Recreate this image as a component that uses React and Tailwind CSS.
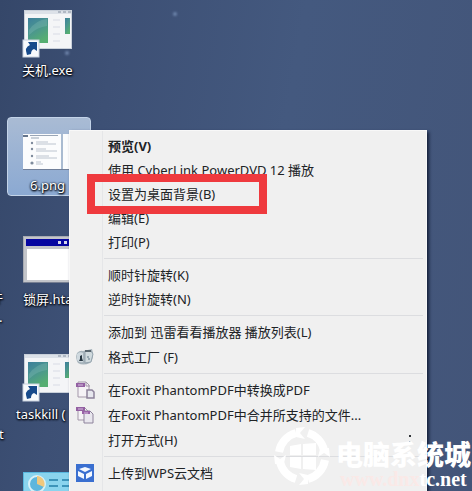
import React from 'react';

const labelShadow = '[text-shadow:0_1px_2px_#000,1px_1px_2px_#0f172a,0_0_2px_#0f172a]';

function ProgramIcon() {
  return (
    <svg width="52" height="48" viewBox="0 0 52 48" aria-hidden="true">
      <defs>
        <linearGradient id="screen" x1="0" y1="0" x2="0.5" y2="1">
          <stop offset="0" stopColor="#3d7f9b" />
          <stop offset="0.5" stopColor="#4a9590" />
          <stop offset="1" stopColor="#56ae72" />
        </linearGradient>
      </defs>
      <rect x="2" y="0" width="48" height="39" fill="#c9d0da" />
      <rect x="3" y="4" width="46" height="34" fill="#f4f5f7" />
      <rect x="3" y="1" width="46" height="3" fill="#dce1e8" />
      <path d="M36 2h3M41 2h3M46 2h3" stroke="#8590a0" strokeWidth="1" />
      <rect x="6" y="8" width="20" height="25" fill="url(#screen)" />
      <path d="M7 20Q14 10 25 9V16Q15 17 7 25Z" fill="#8ac5ba" opacity="0.3" />
      <rect x="43" y="8" width="5" height="16" fill="url(#screen)" />
      <path d="M31 10h7M31 17h7M31 24h7M31 31h7" stroke="#e6e8ee" strokeWidth="2" />
      <rect x="1" y="30" width="16" height="17" fill="#f8fafc" stroke="#c9d2df" strokeWidth="1" />
      <path d="M5 45Q2 37 8 35L6 32H15V41L12 39Q9 40 9 44Z" fill="#174a8b" />
    </svg>
  );
}

function ThumbnailIcon() {
  return (
    <svg width="52" height="38" viewBox="0 0 52 38" aria-hidden="true">
      <rect x="1" y="1" width="50" height="35" fill="#fbfcfd" />
      <path d="M1 36.500H51" stroke="#71809a" />
      <rect x="1" y="2" width="5" height="2" fill="#66758b" />
      <path d="M8 2.500H36M9 5h8" stroke="#9aa6b6" strokeWidth="1.200" />
      <path d="M14 9h12M14 11h20M14 16h10M14 18h21M14 23h13M14 25h21M14 29h5M14 31h7" stroke="#bcc4cf" />
      <g fill="#7e8b9c">
        <circle cx="10" cy="10" r="1.200" />
        <circle cx="10" cy="16" r="1.200" />
        <circle cx="10" cy="23" r="1.200" />
        <circle cx="10" cy="30" r="1.600" />
      </g>
      <path d="M40 1V36" stroke="#a9bbd1" strokeWidth="2" />
    </svg>
  );
}

function WindowIcon() {
  return (
    <svg width="52" height="47" viewBox="0 0 52 47" aria-hidden="true">
      <rect x="1" y="0" width="51" height="47" fill="#a8abb3" />
      <rect x="2" y="1" width="50" height="45" fill="#c3c5ca" />
      <rect x="4" y="3" width="48" height="7" fill="#0606a0" />
      <path d="M36 5h3v3h-3zM42 5h3v3h-3z" fill="#d5d6ea" />
      <rect x="5" y="13" width="47" height="31" fill="#fff" />
      <path d="M1 46.500H52" stroke="#777f92" />
    </svg>
  );
}

function PanelIcon() {
  return (
    <svg className="ml-px" width="52" height="40" viewBox="0 0 52 40" aria-hidden="true">
      <rect width="52" height="40" fill="#58b7df" />
      <rect x="1" y="1" width="50" height="39" fill="#8ad4ee" />
      <circle cx="14" cy="12" r="8" fill="#5db6dc" stroke="#d9f1f8" strokeWidth="2" />
      <path d="M14 12V4a8 8 0 0 1 7 11Z" fill="#efc87e" />
      <path d="M26 8h9M39 8h12M26 14h9M39 14h12" stroke="#237fa9" strokeWidth="1.500" />
    </svg>
  );
}

function FactoryIcon() {
  return (
    <svg width="20" height="18" viewBox="0 0 20 18" aria-hidden="true">
      <path d="M2 5Q5 2 8 3L17 1Q20 9 15 15Q8 18 3 15Q0 10 2 5Z" fill="#a7b4bc" />
      <path d="M2 6Q5 3 8 5V14Q4 15 2 12Z" fill="#cfd9df" />
      <path d="M10 3h6l2 3-2 8-6 1Z" fill="#d0dade" stroke="#94a3ad" />
      <path d="M10 2h6v2h-6z" fill="#59666f" />
      <path d="M5 8l2-1v3l1 3H4l1-2Z" fill="#263641" />
      <path d="M12 9h2M13 11h2" stroke="#607987" />
    </svg>
  );
}

function ConvertIcon() {
  return (
    <svg width="20" height="20" viewBox="0 0 20 20" aria-hidden="true">
      <path d="M3 2h8l3 3v12H3z" fill="#f5f2f6" stroke="#a397a9" />
      <path d="M11 2v4h4" fill="none" stroke="#a397a9" />
      <rect x="1" y="3" width="9" height="4" fill="#9360a2" />
      <path d="M3 5h5" stroke="#d7bcdf" />
      <path d="M12 10h5l2 2v6h-7z" fill="#e7e7ee" stroke="#8d829b" strokeWidth="1.500" />
    </svg>
  );
}

function CombineIcon() {
  return (
    <svg width="20" height="20" viewBox="0 0 20 20" aria-hidden="true">
      <path d="M3 3h7l3 3v9H3z" fill="#f5f2f6" stroke="#a397a9" />
      <rect x="1" y="2" width="9" height="4" fill="#9360a2" />
      <path d="M9 6h6l3 3v9H9z" fill="#e9e7ee" stroke="#8d829b" />
      <rect x="7" y="6" width="8" height="3" fill="#9863a7" />
      <path d="M3 4h5M9 8h4" stroke="#d7bcdf" />
    </svg>
  );
}

function CloudDocIcon() {
  return (
    <svg width="20" height="20" viewBox="0 0 20 20" aria-hidden="true">
      <rect x="1" y="1" width="18" height="18" fill="#3a6fd0" />
      <path d="M10 4l6 2-6 3-6-3zM3 8l6 3v5l-6-3zM17 8l-6 3v5l6-3z" fill="#f4f8ff" />
    </svg>
  );
}

const groups = [
  [
    { text: '预览(V)', bold: true },
    { text: '使用 CyberLink PowerDVD 12 播放' },
    { text: '设置为桌面背景(B)', marked: true },
    { text: '编辑(E)' },
    { text: '打印(P)' },
  ],
  [{ text: '顺时针旋转(K)' }, { text: '逆时针旋转(N)' }],
  [{ text: '添加到 迅雷看看播放器 播放列表(L)' }, { text: '格式工厂 (F)', icon: <FactoryIcon /> }],
  [
    { text: '在Foxit PhantomPDF中转换成PDF', icon: <ConvertIcon /> },
    { text: '在Foxit PhantomPDF中合并所支持的文件...', icon: <CombineIcon /> },
    { text: '打开方式(H)', submenu: true },
  ],
  [{ text: '上传到WPS云文档', icon: <CloudDocIcon /> }],
];

function MenuItem({ item }) {
  return (
    <button
      type="button"
      role="menuitem"
      className={`relative flex h-6 w-full items-center whitespace-nowrap text-left ${item.bold ? 'font-bold' : ''}`}
    >
      <span className="flex w-[38px] shrink-0 justify-start pl-[5px]">{item.icon}</span>
      <span>{item.text}</span>
      {item.submenu && (
        <svg className="ml-auto mr-3" width="7" height="10" viewBox="0 0 7 10" aria-hidden="true">
          <path d="M2 0h2v2h-2zM2 6h2v2h-2z" fill="#303438" />
        </svg>
      )}
      {item.marked && (
        <span className="absolute -inset-y-2 left-[17px] z-10 w-[180px] border-8 border-[#ef3a3e]" />
      )}
    </button>
  );
}

function ContextMenu() {
  return (
    <div
      role="menu"
      className="absolute left-[69px] top-[130px] w-[358px] border border-[#f8f8f8] bg-[#f0f0f0] pb-4 pt-[3px] text-[13px] leading-6 text-[#202326] shadow-[2px_2px_3px_#15203a]"
    >
      <div className="absolute inset-y-0 left-[32px] w-px bg-[#e5e6e8]" />
      {groups.map((group, i) => (
        <React.Fragment key={i}>
          {i > 0 && (
            <div role="separator" className="flex h-[9px] items-center pl-[34px] pr-[3px]">
              <div className="h-px grow bg-[#dcdde0]" />
            </div>
          )}
          <div className={`flex flex-col ${i > 1 ? 'gap-px' : ''}`}>
            {group.map((item) => (
              <MenuItem key={item.text} item={item} />
            ))}
          </div>
        </React.Fragment>
      ))}
    </div>
  );
}

function Watermark() {
  return (
    <div className="absolute left-[274px] top-[427px] flex items-start gap-[6px] whitespace-nowrap text-white">
      <svg width="56" height="58" viewBox="0 0 56 58" aria-hidden="true">
        <g fill="none" stroke="#fff" strokeWidth="8">
          <path d="M34 6A23 24 0 0 1 50 23" />
          <path d="M51 33A23 24 0 0 1 34 52" />
          <path d="M22 52A23 24 0 0 1 6 35" />
          <path d="M5 25A23 24 0 0 1 22 6" />
        </g>
        <path d="M22 1L31 0 26 6 31 12 22 10ZM46 22L55 21 56 30 50 26 44 30ZM34 57L25 58 30 52 25 46 34 48ZM10 36L1 37 0 28 6 32 12 28Z" fill="#fff" />
        <path d="M16 19l11-2v11H16zM29 17l13-1v12H29zM16 30h11v12l-11-2zM29 30h13v13l-13-1z" fill="#fff" />
      </svg>
      <div className="pt-3">
        <p className="font-['Noto_Sans_CJK_SC',sans-serif] text-[27px] font-black leading-[30px]">电脑系统城</p>
        <p className="pl-1 font-['Liberation_Serif',serif] text-[20px] font-bold leading-5">
          <span className="text-[#fae9e7]">www.dnx</span>tc.net
        </p>
      </div>
    </div>
  );
}

function DesktopFile({ icon, label, className = '', labelClass = '' }) {
  return (
    <div className={`flex flex-col ${className}`}>
      {icon}
      <span className={`whitespace-nowrap text-[13px] leading-5 text-white ${labelShadow} ${labelClass}`}>{label}</span>
    </div>
  );
}

export default function App() {
  return (
    <main className="relative h-screen w-full overflow-hidden bg-[#43587d] bg-[linear-gradient(100deg,#354769_0%,#3d5075_22%,#44597f_55%,#435579_100%)] font-['Noto_Sans','Noto_Sans_CJK_SC',sans-serif]">
      <span className="absolute left-[173px] top-3 size-1 rounded-full bg-[#6f86ad] blur-[1px]" />
      <span className="absolute left-[65px] top-[51px] size-1 rounded-full bg-[#7186ac] blur-[1px]" />

      <div className={`absolute -left-[10px] top-[287px] text-[13px] leading-5 text-white ${labelShadow}`}>
        <p>件</p>
        <p className="pl-[9px]">.</p>
        <p className="pl-[9px] pt-[97px]">t</p>
      </div>

      <div className="flex flex-col items-start pl-[7px] pt-[10px]">
        <div className="h-[107px] pl-[15px]">
          <DesktopFile className="gap-[2px]" icon={<ProgramIcon />} label="关机.exe" />
        </div>
        <div className="h-[119px]">
          <div className="h-[79px] w-[84px] rounded-sm border border-[#c3d3e8] bg-linear-to-b from-[#a9bbd4] to-[#8ba9d2] pl-[14px] pt-[15px]">
            <DesktopFile className="gap-1" icon={<ThumbnailIcon />} label="6.png" labelClass="pl-2" />
          </div>
        </div>
        <div className="h-[118px] pl-[15px]">
          <DesktopFile className="gap-[6px]" icon={<WindowIcon />} label="锁屏.hta" labelClass="pl-px" />
        </div>
        <div className="h-[118px] pl-[15px]">
          <DesktopFile className="gap-[2px]" icon={<ProgramIcon />} label="taskkill (" labelClass="-ml-[6px]" />
        </div>
        <div className="pl-[15px]">
          <PanelIcon />
        </div>
      </div>

      <ContextMenu />
      <Watermark />
    </main>
  );
}
